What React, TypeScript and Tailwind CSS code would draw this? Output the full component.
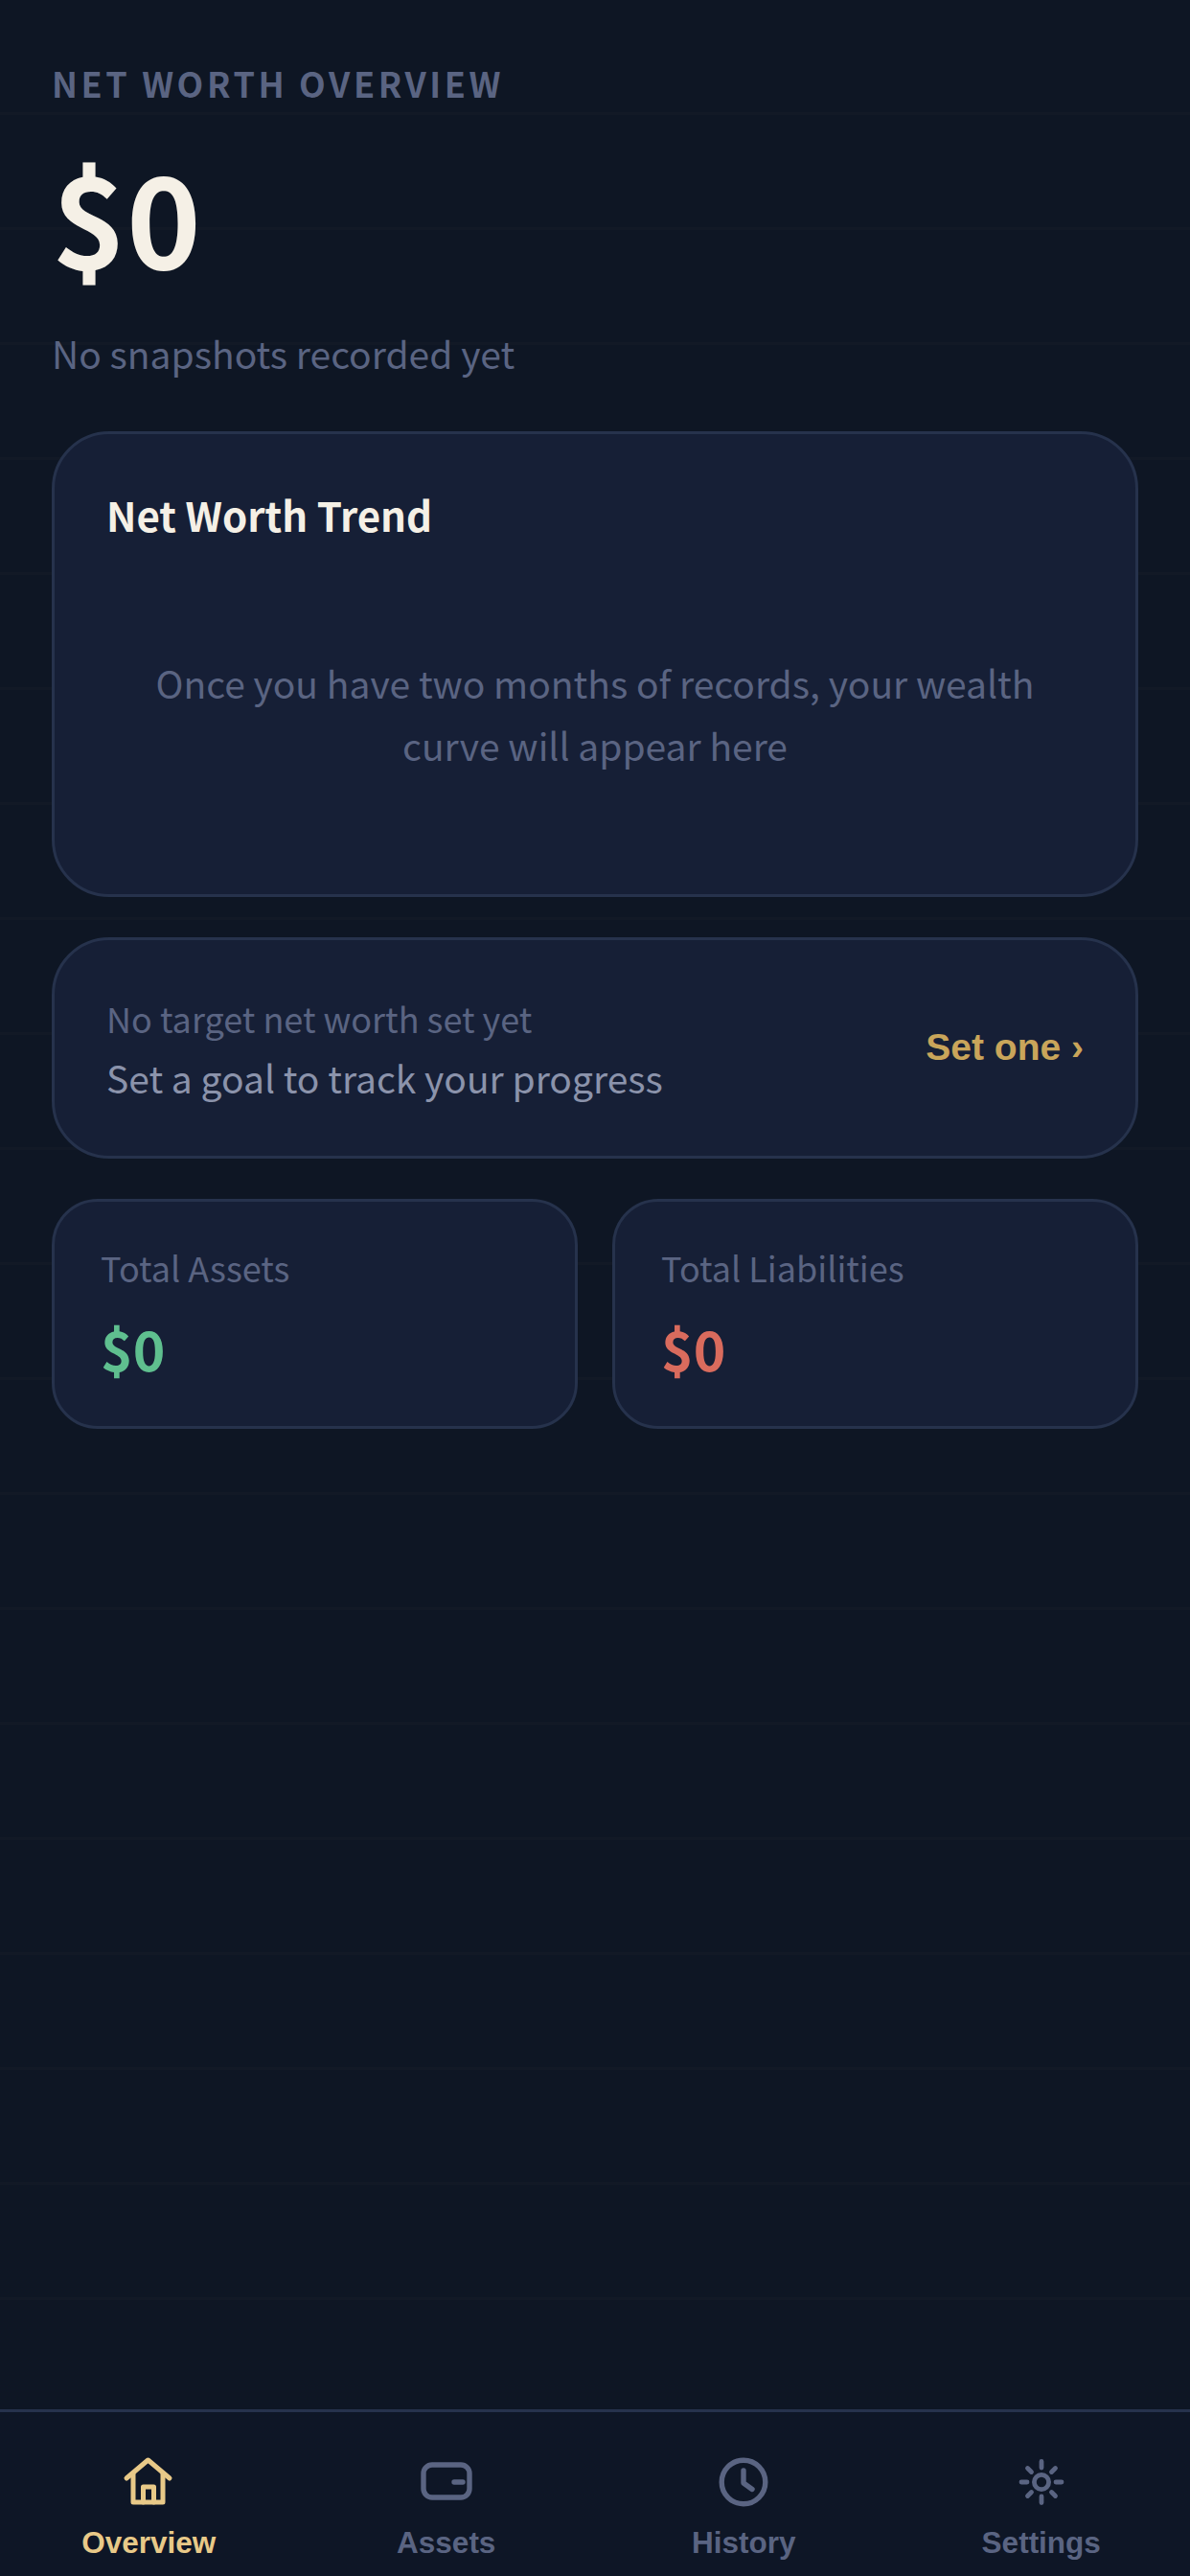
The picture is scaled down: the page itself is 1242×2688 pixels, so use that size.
const sans = "font-['Noto_Sans_CJK_SC','Noto_Sans_CJK_JP',sans-serif]";

function HomeIcon() {
  return (
    <svg width="66" height="66" viewBox="0 0 66 66" fill="none" stroke="currentColor" strokeWidth="5" strokeLinecap="round" strokeLinejoin="round">
      <path d="M10 29 L32.5 10 L55 29" />
      <path d="M17 24 V54 H48 V24" />
      <path d="M27.5 54 V38 H38.5 V54" />
    </svg>
  );
}

function WalletIcon() {
  return (
    <svg width="66" height="66" viewBox="0 0 66 66" fill="none" stroke="currentColor" strokeWidth="5.4" strokeLinecap="round" strokeLinejoin="round">
      <rect x="9" y="15" width="48" height="34" rx="9" />
      <path d="M41 33 H50" />
    </svg>
  );
}

function ClockIcon() {
  return (
    <svg width="66" height="66" viewBox="0 0 66 66" fill="none" stroke="currentColor" strokeWidth="5.4" strokeLinecap="round" strokeLinejoin="round">
      <circle cx="33" cy="33" r="22.8" />
      <path d="M33 21 V34 L42 40.5" />
    </svg>
  );
}

function SunIcon() {
  return (
    <svg width="66" height="66" viewBox="0 0 66 66" fill="none" stroke="currentColor" strokeWidth="4.8" strokeLinecap="round" strokeLinejoin="round">
      <circle cx="33" cy="33" r="7.6" />
      <path d="M33 11.5 V18 M33 48 V54.5 M12 33 H18 M48 33 H54" />
      <path d="M18.5 18.5 L22.5 22.5 M43.5 43.5 L47.5 47.5 M47.5 18.5 L43.5 22.5 M22.5 43.5 L18.5 47.5" />
    </svg>
  );
}

const tabs = [
  { label: 'Overview', icon: <HomeIcon />, active: true },
  { label: 'Assets', icon: <WalletIcon />, active: false },
  { label: 'History', icon: <ClockIcon />, active: false },
  { label: 'Settings', icon: <SunIcon />, active: false },
];

export default function App() {
  return (
    <div className={`flex h-[2688px] w-[1242px] flex-col overflow-hidden bg-[#0e1624] ${sans}`}>
      {/* Page content, with the faint ruled background */}
      <main className="flex-1 bg-[linear-gradient(#121926_3px,transparent_3px)] bg-[length:100%_120px] bg-[position:0_117px] px-[54px] pt-[58px]">
        <p className="text-[36px] font-semibold leading-[56px] tracking-[3.6px] text-[#5a6482]">NET WORTH OVERVIEW</p>
        <p className="mt-[18px] text-[132px] font-bold leading-[184px] text-[#f5f0e6]">$0</p>
        <p className="mt-[22px] text-[39px] leading-[60px] text-[#5a6482]">No snapshots recorded yet</p>

        {/* Trend card */}
        <section className="mt-[52px] h-[486px] rounded-[60px] border-[3px] border-[#26324c] bg-[#161f36] px-[54px] pt-[49px]">
          <h2 className="text-[42px] font-bold leading-[70px] text-[#f5f0e6]">Net Worth Trend</h2>
          <p className="mt-[108px] text-center text-[39px] leading-[65px] text-[#5a6482]">
            Once you have two months of records, your wealth
            <br />
            curve will appear here
          </p>
        </section>

        {/* Target card */}
        <section className="mt-[42px] flex h-[231px] items-center justify-between rounded-[60px] border-[3px] border-[#26324c] bg-[#161f36] px-[54px]">
          <div>
            <p className="text-[36px] leading-[56px] text-[#5a6482]">No target net worth set yet</p>
            <p className="mt-[4px] text-[39px] leading-[60px] text-[#8b93ab]">Set a goal to track your progress</p>
          </div>
          <span className="font-['Liberation_Sans',sans-serif] text-[39px] font-bold text-[#c9a55a]">Set one ›</span>
        </section>

        {/* Totals */}
        <div className="mt-[42px] grid grid-cols-2 gap-[36px]">
          <section className="h-[240px] rounded-[48px] border-[3px] border-[#26324c] bg-[#161f36] px-[48px] pt-[40px]">
            <p className="text-[36px] leading-[56px] text-[#5a6482]">Total Assets</p>
            <p className="mt-[17px] text-[57px] font-semibold leading-[78px] text-[#5fbf8f]">$0</p>
          </section>
          <section className="h-[240px] rounded-[48px] border-[3px] border-[#26324c] bg-[#161f36] px-[48px] pt-[40px]">
            <p className="text-[36px] leading-[56px] text-[#5a6482]">Total Liabilities</p>
            <p className="mt-[17px] text-[57px] font-semibold leading-[78px] text-[#d96b5d]">$0</p>
          </section>
        </div>
      </main>

      {/* Bottom tab bar */}
      <nav className="flex h-[174px] border-t-[3px] border-[#26324c] bg-[#0e1626] pt-[40px] font-['Liberation_Sans',sans-serif]">
        {tabs.map((tab) => (
          <div key={tab.label} className={`flex flex-1 flex-col items-center ${tab.active ? 'text-[#e8c988]' : 'text-[#5a6482]'}`}>
            {tab.icon}
            <span className="mt-[11px] text-[31.5px] font-bold leading-[38px]">{tab.label}</span>
          </div>
        ))}
      </nav>
    </div>
  );
}
